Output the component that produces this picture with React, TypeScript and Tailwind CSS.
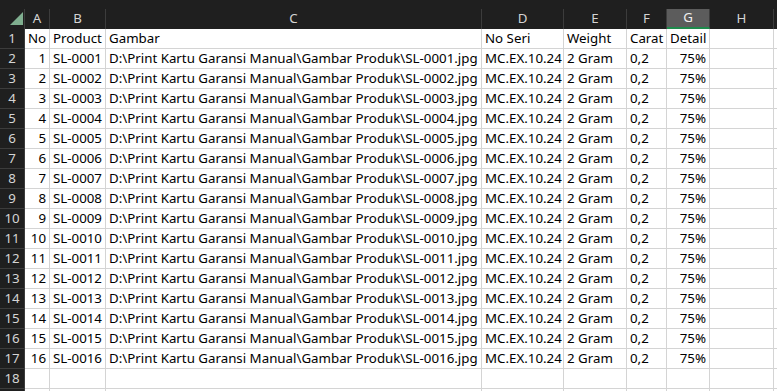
import React from "react";

// Column layout of the sheet: letter, width in px, alignment of its data.
const columns = [
  { key: "A", width: 25, align: "right" },
  { key: "B", width: 56, align: "left" },
  { key: "C", width: 376, align: "left" },
  { key: "D", width: 82, align: "left" },
  { key: "E", width: 63, align: "left" },
  { key: "F", width: 40, align: "left" },
  { key: "G", width: 43, align: "right" },
  { key: "H", width: 64, align: "left" },
  { key: "I", width: 64, align: "left" },
] as const;

const header = ["No", "Product", "Gambar", "No Seri", "Weight", "Carat", "Detail", "", ""];

const rows: string[][] = [
  header,
  ...Array.from({ length: 16 }, (_, i) => {
    const n = i + 1;
    const code = `SL-${String(n).padStart(4, "0")}`;
    return [
      String(n),
      code,
      `D:\\Print Kartu Garansi Manual\\Gambar Produk\\${code}.jpg`,
      "MC.EX.10.24",
      "2 Gram",
      "0,2",
      "75%",
      "",
      "",
    ];
  }),
  ["", "", "", "", "", "", "", "", ""],
  ["", "", "", "", "", "", "", "", ""],
];

export default function App() {
  return (
    <div
      className="h-[391px] w-[777px] overflow-hidden bg-white text-[13.3px] text-black"
      style={{ fontFamily: '"Noto Sans", "Open Sans", sans-serif' }}
    >
      {/* Strip above the column letters */}
      <div className="h-[9px] bg-[#1f1f1f]" />

      {/* Column letters */}
      <div className="flex h-[20px] bg-[#1f1f1f] text-[#d4d4d4]">
        <div className="relative w-[25px] shrink-0 border-r border-[#3c3c3c]">
          <svg className="absolute left-[10px] top-[3px]" width="13" height="13" viewBox="0 0 13 13">
            <polygon points="13,0 13,13 0,13" fill="#7fae8f" />
          </svg>
        </div>
        {columns.map((c) => {
          const selected = c.key === "G";
          return (
            <div
              key={c.key}
              style={{ width: c.width }}
              className={
                selected
                  ? "flex shrink-0 items-center justify-center border-r border-b-2 border-r-[#3c3c3c] border-b-[#1f8a4c] bg-[#5c5c5c] leading-none text-[#f0f0f0]"
                  : "flex shrink-0 items-center justify-center border-r border-[#3c3c3c] leading-none"
              }
            >
              {c.key}
            </div>
          );
        })}
      </div>

      {/* Rows */}
      {rows.map((cells, r) => (
        <div key={r} className="flex h-[20px]">
          <div className="flex w-[25px] shrink-0 items-center justify-center border-r border-b border-[#3c3c3c] bg-[#1f1f1f] leading-none text-[#d4d4d4]">
            {r + 1}
          </div>
          {columns.map((c, ci) => (
            <div
              key={c.key}
              style={{ width: c.width }}
              className={
                c.align === "right"
                  ? "shrink-0 overflow-hidden whitespace-nowrap border-r border-b border-[#d4d4d4] px-[3px] text-right leading-[19px]"
                  : "shrink-0 overflow-hidden whitespace-nowrap border-r border-b border-[#d4d4d4] px-[3px] leading-[19px]"
              }
            >
              {cells[ci]}
            </div>
          ))}
        </div>
      ))}
    </div>
  );
}
